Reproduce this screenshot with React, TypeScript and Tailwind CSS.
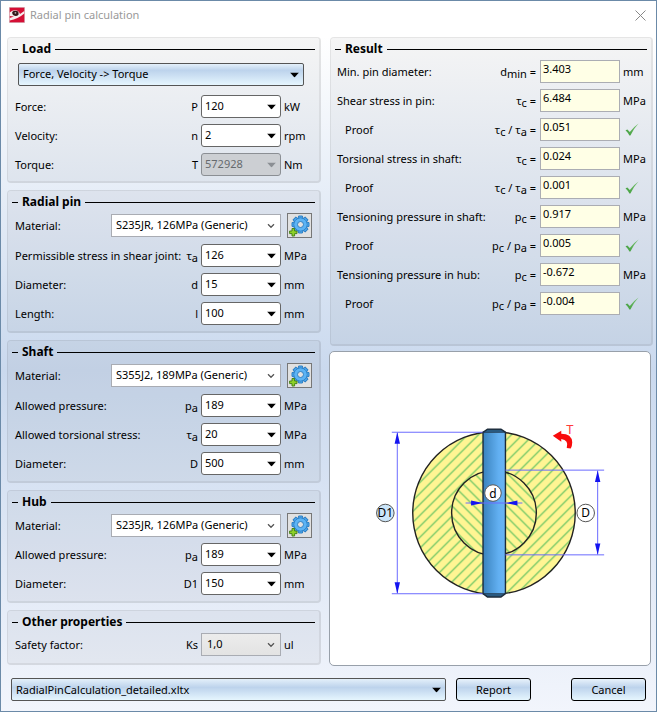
import React, { useState } from "react";

type SymbolPart = { base: string; sub?: string };

interface PanelProps {
  title: string;
  children: React.ReactNode;
  className?: string;
}

const Panel = ({ title, children, className = "" }: PanelProps) => (
  <section
    className={`rounded-[4px] border border-r-2 border-b-2 border-black/10 bg-black/4 bg-clip-padding ${className}`}
  >
    <h2 className="flex h-[22px] items-center gap-1 px-1 text-[12px] font-bold">
      <span className="h-px w-1.5 bg-black" />
      <span>{title}</span>
      <span className="h-px flex-1 bg-black" />
    </h2>
    {children}
  </section>
);

const SymbolText = ({ parts }: { parts: SymbolPart[] }) => (
  <>
    {parts.map((part, index) => (
      <React.Fragment key={index}>
        {index > 0 && " / "}
        {part.base}
        {part.sub && <sub className="text-[11px]">{part.sub}</sub>}
      </React.Fragment>
    ))}
  </>
);

const Triangle = () => (
  <svg
    viewBox="0 0 9 5"
    className="pointer-events-none absolute top-1/2 right-[5px] h-[5px] w-[9px] -translate-y-1/2"
  >
    <path d="M0 0H9L4.5 5Z" fill="currentColor" />
  </svg>
);

const Chevron = () => (
  <svg
    viewBox="0 0 8 5"
    className="pointer-events-none absolute top-1/2 right-1.5 h-[5px] w-2 -translate-y-1/2"
  >
    <path d="M1 0.8L4 3.8L7 0.8" fill="none" stroke="#555" strokeWidth="1.3" />
  </svg>
);

interface ComboProps {
  id: string;
  value: string;
  disabled?: boolean;
}

const Combo = ({ id, value, disabled }: ComboProps) => (
  <div
    className={`relative h-[23px] w-20 shrink-0 ${
      disabled ? "text-[#8b8f94]" : "text-black"
    }`}
  >
    <select
      id={id}
      disabled={disabled}
      defaultValue={value}
      className="h-full w-full appearance-none rounded-[3px] border border-[#666] bg-white pr-4 pb-0.5 pl-[3px] disabled:border-[#8b8f94] disabled:bg-[#cccfd3] disabled:text-[#666a6e] disabled:opacity-100"
    >
      <option>{value}</option>
    </select>
    <Triangle />
  </div>
);

interface FieldProps extends ComboProps {
  label: string;
  symbol: SymbolPart;
  unit: string;
}

const Field = ({ id, label, symbol, value, unit, disabled }: FieldProps) => (
  <div className="flex h-[29px] items-center pr-[3px] pl-[7px]">
    <label htmlFor={id} className="flex-1 whitespace-nowrap">
      {label}
    </label>
    <span className="pr-[3px] whitespace-nowrap">
      <SymbolText parts={[symbol]} />
    </span>
    <Combo id={id} value={value} disabled={disabled} />
    <span className="w-[35px] pl-[3px]">{unit}</span>
  </div>
);

const TEETH = [0, 45, 90, 135, 180, 225, 270, 315];

const GearIcon = () => (
  <svg viewBox="0 0 23 23" className="h-[23px] w-[23px]">
    <g fill="#50aaf0" stroke="#2f80c4" strokeWidth="1">
      {TEETH.map((angle) => (
        <path
          key={angle}
          d="M10 5.5L10.6 2H14.4L15 5.5Z"
          transform={`rotate(${angle} 12.5 10.5)`}
        />
      ))}
      <circle cx="12.5" cy="10.5" r="6.6" />
    </g>
    <circle cx="12.5" cy="10.5" r="6.1" fill="#5cb4f5" />
    <circle cx="12.5" cy="10.5" r="3" fill="#e1e1e1" stroke="#2f80c4" />
    <path
      d="M4 14.5H6.6V17H9V19.6H6.6V22H4V19.6H1.6V17H4Z"
      fill="#8fd128"
      stroke="#3f7d12"
      strokeWidth="0.9"
    />
  </svg>
);

const MaterialField = ({ id, value }: { id: string; value: string }) => (
  <div className="flex h-[25px] items-center px-[7px]">
    <label htmlFor={id} className="flex-1">
      Material:
    </label>
    <div className="relative h-[23px] w-[170px]">
      <select
        id={id}
        defaultValue={value}
        className="h-full w-full appearance-none border border-[#a9acb3] bg-white pr-4 pb-0.5 pl-1"
      >
        <option>{value}</option>
      </select>
      <Chevron />
    </div>
    <button
      type="button"
      aria-label="Edit material"
      className="ml-1.5 flex h-[25px] w-[25px] items-center justify-center border border-[#777] bg-[#e1e1e1]"
    >
      <GearIcon />
    </button>
  </div>
);

const CheckMark = () => (
  <svg viewBox="0 0 14 14" className="ml-0.5 h-3.5 w-3.5">
    <defs>
      <linearGradient id="check" x1="0" x2="1" y1="1" y2="0">
        <stop offset="0" stopColor="#3f9d3b" />
        <stop offset="1" stopColor="#7cc474" />
      </linearGradient>
    </defs>
    <path
      d="M0.5 7.2L2.4 6.4L4.8 9Q8.5 3.8 13.6 0.4Q8.6 5.6 5.4 12.4H4.4Q2.8 9.4 0.5 7.2Z"
      fill="url(#check)"
    />
  </svg>
);

const RESULTS: {
  label: string;
  symbols: SymbolPart[];
  value: string;
  unit?: string;
}[] = [
  {
    label: "Min. pin diameter:",
    symbols: [{ base: "d", sub: "min" }],
    value: "3.403",
    unit: "mm",
  },
  {
    label: "Shear stress in pin:",
    symbols: [{ base: "τ", sub: "c" }],
    value: "6.484",
    unit: "MPa",
  },
  {
    label: "Proof",
    symbols: [
      { base: "τ", sub: "c" },
      { base: "τ", sub: "a" },
    ],
    value: "0.051",
  },
  {
    label: "Torsional stress in shaft:",
    symbols: [{ base: "τ", sub: "c" }],
    value: "0.024",
    unit: "MPa",
  },
  {
    label: "Proof",
    symbols: [
      { base: "τ", sub: "c" },
      { base: "τ", sub: "a" },
    ],
    value: "0.001",
  },
  {
    label: "Tensioning pressure in shaft:",
    symbols: [{ base: "p", sub: "c" }],
    value: "0.917",
    unit: "MPa",
  },
  {
    label: "Proof",
    symbols: [
      { base: "p", sub: "c" },
      { base: "p", sub: "a" },
    ],
    value: "0.005",
  },
  {
    label: "Tensioning pressure in hub:",
    symbols: [{ base: "p", sub: "c" }],
    value: "-0.672",
    unit: "MPa",
  },
  {
    label: "Proof",
    symbols: [
      { base: "p", sub: "c" },
      { base: "p", sub: "a" },
    ],
    value: "-0.004",
  },
];

const PinDiagram = () => (
  <svg
    viewBox="329 352 321 312"
    className="w-full"
    role="img"
    aria-label="Cross section of the shaft, hub and pin"
  >
    <defs>
      <pattern
        id="hatchHub"
        width="11"
        height="11"
        patternUnits="userSpaceOnUse"
      >
        <rect width="11" height="11" fill="#fff593" />
        <path
          d="M-2 13L13 -2M-2 2L2 -2M9 13L13 9"
          stroke="#52bd5c"
          strokeWidth="1.1"
        />
      </pattern>
      <pattern
        id="hatchShaft"
        width="11"
        height="11"
        patternUnits="userSpaceOnUse"
      >
        <rect width="11" height="11" fill="#fff593" />
        <path
          d="M-2 -2L13 13M9 -2L13 2M-2 9L2 13"
          stroke="#52bd5c"
          strokeWidth="1.1"
        />
      </pattern>
      <linearGradient id="pin" x1="0" x2="1" y1="0" y2="0">
        <stop offset="0" stopColor="#3a82bd" />
        <stop offset="0.7" stopColor="#62b0f2" />
        <stop offset="1" stopColor="#6ab4f4" />
      </linearGradient>
    </defs>
    <circle
      cx="493.5"
      cy="513.5"
      r="81.5"
      fill="url(#hatchHub)"
      stroke="#222"
      strokeWidth="1.4"
    />
    <circle
      cx="493.5"
      cy="513.5"
      r="42.5"
      fill="url(#hatchShaft)"
      stroke="#222"
      strokeWidth="1.4"
    />
    <path
      d="M482.5 432.5L487 429.5H500.5L505 432.5V594.5L500.5 597.8H487L482.5 594.5Z"
      fill="url(#pin)"
      stroke="#1c2a38"
      strokeWidth="1.4"
    />
    <path
      d="M483 432.5L487 430H500.5L504.5 432.5ZM483 594.5H504.5L500.5 597H487Z"
      fill="#2e6794"
      stroke="#1c2a38"
      strokeWidth="0.8"
    />
    <g stroke="#6a6aff" strokeWidth="1">
      <path d="M391 432.5H482M391 594.5H482M396.5 433V594" />
      <path d="M505 470.5H604M505 555.5H604M597.5 471V555" />
      <path d="M465 503.5H522" />
    </g>
    <g fill="#1414f0">
      <path d="M396.5 432.5L399.2 444H393.8ZM396.5 594.5L399.2 583H393.8Z" />
      <path d="M597.5 471L600.2 482.5H594.8ZM597.5 555.5L600.2 544H594.8Z" />
      <path d="M482.5 503.5L470.5 501V506ZM505.5 503.5L517 501V506Z" />
    </g>
    <g stroke="#555" strokeWidth="1">
      <circle cx="384.5" cy="513.5" r="8.8" fill="#cbe5f8" />
      <circle cx="585.5" cy="513.5" r="8.8" fill="#fff" />
      <circle cx="492.5" cy="493.5" r="8.3" fill="#fff" />
    </g>
    <g fontSize="12" textAnchor="middle" fill="#000">
      <text x="384.5" y="518">
        D1
      </text>
      <text x="585.5" y="518">
        D
      </text>
      <text x="492.5" y="498">
        d
      </text>
    </g>
    <path
      d="M552.5 436L561 431V434Q571.5 434 572 442.5Q572 446 570.5 448.8L566.5 448.2Q568.8 440.5 561 439.4V442Z"
      fill="#f80c0c"
    />
    <text x="569.5" y="434.5" fontSize="13" textAnchor="middle" fill="#ff3b3b">
      T
    </text>
  </svg>
);

const AppIcon = () => (
  <svg viewBox="0 0 16 16" className="h-4 w-4">
    <rect width="16" height="16" fill="#d9c4c8" />
    <rect x="0.7" y="0.7" width="14.6" height="14.6" fill="#d50f35" />
    <path
      d="M0.7 5.5Q4 2.5 8 3.5Q10.5 4.5 11 7L15.3 4V6.5Q9 12 0.7 13.5V11L5 9.6L0.7 9Z"
      fill="#f5eeee"
    />
    <path d="M3.2 5Q5 3 8.3 4Q10 5 9.6 7.4Q8 9.4 5.6 8.8Q3 8 3.2 5Z" fill="#33181b" />
    <circle cx="6.4" cy="5.8" r="0.9" fill="#b9adad" />
  </svg>
);

const App = () => {
  const [template, setTemplate] = useState("RadialPinCalculation_detailed.xltx");

  return (
    <div className="flex min-h-screen flex-col border border-[#6b8aa8] bg-linear-to-b from-white from-5% via-[#cad9ee] via-52% to-[#f2f5fc] pb-2.5 font-['Noto_Sans','Open_Sans',sans-serif] text-[11px] leading-4 text-black">
      <header className="flex h-9 items-start justify-between pt-1.5 pr-2.5 pl-2">
        <div className="flex items-center gap-[5px] text-[#999]">
          <AppIcon />
          <h1>Radial pin calculation</h1>
        </div>
        <button type="button" aria-label="Close" className="pt-[3px]">
          <svg viewBox="0 0 11 11" className="h-[11px] w-[11px]">
            <path d="M0.5 0.5L10.5 10.5M10.5 0.5L0.5 10.5" stroke="#888" />
          </svg>
        </button>
      </header>

      <main className="grid flex-1 grid-cols-[minmax(0,314fr)_minmax(0,324fr)] gap-2 pr-[3px] pl-1.5">
        <div className="flex flex-col gap-[7px]">
          <Panel title="Load" className="pb-0.5">
            <div className="pt-[3px] pr-[15px] pb-1.5 pl-2.5">
              <div className="relative h-[23px]">
                <select
                  aria-label="Load input mode"
                  className="h-full w-full appearance-none rounded-[2px] border border-[#555] bg-linear-to-b from-[#e4f0fa] via-[#bdd3ec] via-30% to-[#e6f6fe] pr-4 pb-0.5 pl-1"
                >
                  <option>{"Force, Velocity -> Torque"}</option>
                </select>
                <Triangle />
              </div>
            </div>
            <Field
              id="force"
              label="Force:"
              symbol={{ base: "P" }}
              value="120"
              unit="kW"
            />
            <Field
              id="velocity"
              label="Velocity:"
              symbol={{ base: "n" }}
              value="2"
              unit="rpm"
            />
            <Field
              id="torque"
              label="Torque:"
              symbol={{ base: "T" }}
              value="572928"
              unit="Nm"
              disabled
            />
          </Panel>

          <Panel title="Radial pin" className="pb-[3px]">
            <MaterialField id="pin-material" value="S235JR, 126MPa (Generic)" />
            <div className="pt-[3px]">
              <Field
                id="pin-stress"
                label="Permissible stress in shear joint:"
                symbol={{ base: "τ", sub: "a" }}
                value="126"
                unit="MPa"
              />
              <Field
                id="pin-diameter"
                label="Diameter:"
                symbol={{ base: "d" }}
                value="15"
                unit="mm"
              />
              <Field
                id="pin-length"
                label="Length:"
                symbol={{ base: "l" }}
                value="100"
                unit="mm"
              />
            </div>
          </Panel>

          <Panel title="Shaft" className="pb-[3px]">
            <MaterialField
              id="shaft-material"
              value="S355J2, 189MPa (Generic)"
            />
            <div className="pt-[3px]">
              <Field
                id="shaft-pressure"
                label="Allowed pressure:"
                symbol={{ base: "p", sub: "a" }}
                value="189"
                unit="MPa"
              />
              <Field
                id="shaft-stress"
                label="Allowed torsional stress:"
                symbol={{ base: "τ", sub: "a" }}
                value="20"
                unit="MPa"
              />
              <Field
                id="shaft-diameter"
                label="Diameter:"
                symbol={{ base: "D" }}
                value="500"
                unit="mm"
              />
            </div>
          </Panel>

          <Panel title="Hub" className="pb-[3px]">
            <MaterialField id="hub-material" value="S235JR, 126MPa (Generic)" />
            <div className="pt-0.5">
              <Field
                id="hub-pressure"
                label="Allowed pressure:"
                symbol={{ base: "p", sub: "a" }}
                value="189"
                unit="MPa"
              />
              <Field
                id="hub-diameter"
                label="Diameter:"
                symbol={{ base: "D1" }}
                value="150"
                unit="mm"
              />
            </div>
          </Panel>

          <Panel title="Other properties" className="pb-[7px]">
            <div className="flex h-[23px] items-center pr-[3px] pl-[7px]">
              <label htmlFor="safety" className="flex-1">
                Safety factor:
              </label>
              <span className="pr-[3px]">Ks</span>
              <div className="relative h-[23px] w-20">
                <select
                  id="safety"
                  className="h-full w-full appearance-none border border-[#a9acb3] bg-linear-to-b from-[#ececec] to-[#e3e3e3] pr-4 pb-0.5 pl-[5px]"
                >
                  <option>1,0</option>
                </select>
                <Chevron />
              </div>
              <span className="w-[35px] pl-[3px]">ul</span>
            </div>
          </Panel>
        </div>

        <div className="flex flex-col gap-[5px]">
          <Panel title="Result" className="ml-px pb-[29px]">
            <div className="flex flex-col gap-1.5">
              {RESULTS.map((result, index) => (
                <div
                  key={index}
                  className="flex h-[23px] items-center pr-[3px] pl-1.5"
                >
                  <label
                    htmlFor={`result-${index}`}
                    className={`flex-1 whitespace-nowrap ${
                      result.unit ? "" : "pl-2"
                    }`}
                  >
                    {result.label}
                  </label>
                  <span className="pr-1 whitespace-nowrap">
                    <SymbolText parts={result.symbols} /> =
                  </span>
                  <input
                    id={`result-${index}`}
                    type="text"
                    readOnly
                    value={result.value}
                    className="h-[23px] w-20 shrink-0 border border-[#abadb3] bg-[#ffffe6] pb-1.5 pl-0.5"
                  />
                  <span className="w-7 pl-[3px]">
                    {result.unit || <CheckMark />}
                  </span>
                </div>
              ))}
            </div>
          </Panel>
          <div className="mr-0.5 flex-1 rounded-[5px] border border-[#98a0aa] bg-white">
            <PinDiagram />
          </div>
        </div>
      </main>

      <footer className="flex px-2.5 pt-3">
        <div className="relative h-[23px] flex-1">
          <select
            aria-label="Report template"
            value={template}
            onChange={(e) => setTemplate(e.target.value)}
            className="h-full w-full appearance-none rounded-[2px] border border-[#555] bg-linear-to-b from-[#e4f0fa] via-[#bdd3ec] via-40% to-[#e6f6fe] pr-4 pl-1"
          >
            <option>RadialPinCalculation_detailed.xltx</option>
          </select>
          <Triangle />
        </div>
        <button
          type="button"
          className="ml-2.5 h-[23px] w-[75px] rounded-[3px] border border-black bg-linear-to-b from-[#e8f2fb] via-[#bdd3ec] via-40% to-[#e6f6fe]"
        >
          Report
        </button>
        <button
          type="button"
          className="ml-10 h-[23px] w-[75px] rounded-[3px] border border-black bg-linear-to-b from-[#e8f2fb] via-[#bdd3ec] via-40% to-[#e6f6fe]"
        >
          Cancel
        </button>
      </footer>
    </div>
  );
};

export default App;
